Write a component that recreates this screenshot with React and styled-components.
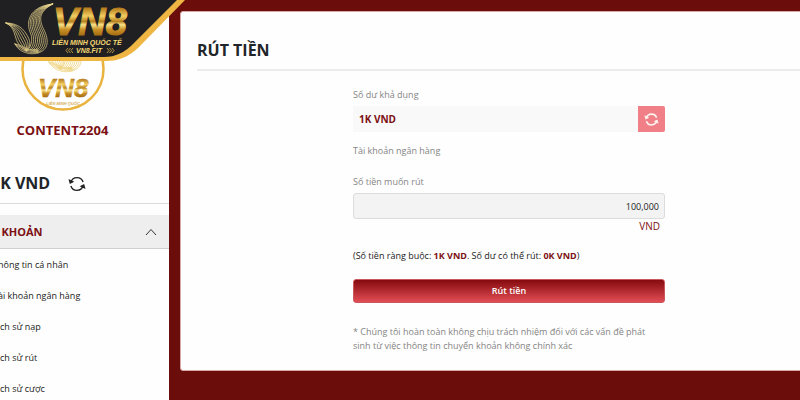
import React, { useState } from "react";
import styled, { createGlobalStyle } from "styled-components";

const GlobalStyle = createGlobalStyle`
  * {
    box-sizing: border-box;
  }

  body {
    margin: 0;
    background: #6b0d0b;
    color: #212529;
    font-family: "Open Sans", "Noto Sans", sans-serif;
    font-size: 9px;
    line-height: 14px;
  }
`;

const PageStyles = styled.div`
  display: flex;
  min-height: 100vh;
  overflow: hidden;
`;

const Sidebar = styled.aside`
  flex: 0 0 169px;
  max-height: 100vh;
  background: #fefefe;
  overflow: hidden;
`;

// the panel is scrolled a bit to the left, so its labels start off screen
const SidebarPanel = styled.div`
  margin-left: -44px;
  padding-top: 27px;
`;

const Profile = styled.div`
  display: flex;
  flex-direction: column;
  align-items: center;
  gap: 9px;

  svg {
    display: block;
    width: 86px;
    height: 84px;
  }
`;

const UserName = styled.h2`
  margin: 0;
  color: #7c1013;
  font-size: 13px;
  font-weight: 700;
  line-height: 20px;
`;

const Balance = styled.div`
  display: flex;
  align-items: center;
  gap: 18px;
  margin-top: 31px;
  padding: 0 0 7px 35px;
  border-bottom: 1px solid #dcdcdc;
  font-size: 16px;
  font-weight: 700;
  line-height: 25px;
`;

const IconButton = styled.button`
  display: flex;
  padding: 0;
  border: 0;
  background: none;
  color: #222;
  cursor: pointer;
`;

const MenuHeader = styled.button`
  display: flex;
  align-items: center;
  justify-content: space-between;
  width: 100%;
  height: 34px;
  margin-top: 11px;
  padding: 0 12px 0 25px;
  border: 0;
  border-bottom: 1px solid #d0d0d0;
  background: #eeeeee;
  color: #7c1013;
  font: inherit;
  font-size: 11px;
  font-weight: 700;
  cursor: pointer;
`;

const MenuList = styled.ul`
  margin: 0;
  padding: 0 0 0 37px;
  list-style: none;
`;

const MenuLink = styled.a`
  display: block;
  padding: 8px 0;
  color: #222;
  line-height: 15px;
  text-decoration: none;
  white-space: nowrap;
`;

const Main = styled.main`
  flex: 1;
  min-width: 0;
  padding: 11px 0 30px 11px;
`;

const Card = styled.section`
  margin-right: -38px;
  padding: 27px 16px 17px;
  border: 1px solid #d9a9a9;
  border-radius: 3px;
  background: #fefefe;
`;

const CardTitle = styled.h1`
  margin: 0;
  padding-bottom: 8px;
  border-bottom: 2px solid #ececec;
  color: #212529;
  font-size: 16px;
  font-weight: 700;
  line-height: 22px;
`;

const Form = styled.form`
  display: flex;
  flex-direction: column;
  max-width: 312px;
  margin: 17px auto 0;
`;

const Label = styled.label`
  margin-bottom: ${props => (props.$spaced ? "17px" : "4px")};
  color: #858585;
`;

const BalanceRow = styled.div`
  display: flex;
  align-items: stretch;
  height: 26px;
  margin-bottom: 12px;
  background: #f9f9f9;

  output {
    flex: 1;
    padding: 0 6px;
    color: #7c1013;
    font-size: 10px;
    font-weight: 700;
    line-height: 26px;
  }
`;

const RefreshButton = styled(IconButton)`
  align-items: center;
  justify-content: center;
  width: 27px;
  border-radius: 0 2px 2px 0;
  background: #f07f87;
  color: #fff3ee;
`;

const AmountInput = styled.input`
  width: 100%;
  height: 26px;
  padding: 0 5px;
  border: 1px solid #dcdcdc;
  border-radius: 3px;
  background: #f3f3f3;
  color: #222;
  font: inherit;
  text-align: right;
`;

const Currency = styled.span`
  padding-right: 5px;
  color: #7c1013;
  font-size: 10px;
  text-align: right;
`;

const Limits = styled.p`
  margin: 16px 0;
  color: #222;

  strong {
    color: #7c1013;
  }
`;

const SubmitButton = styled.button`
  height: 24px;
  border: 1px solid #c9575c;
  border-radius: 3px;
  background: linear-gradient(#850a0e, #e24d54);
  color: #fff;
  font: inherit;
  font-weight: 600;
  cursor: pointer;
`;

const Note = styled.p`
  margin: 22px 0 0;
  color: #858585;
`;

const BrandRibbon = styled.svg`
  position: absolute;
  top: 0;
  left: 0;
  width: 186px;
  height: 62px;
`;

const menuItems = [
  "Thông tin cá nhân",
  "Tài khoản ngân hàng",
  "Lịch sử nạp",
  "Lịch sử rút",
  "Lịch sử cược"
];

// every feather is a fan of curves between two outer edges
const feathers = [
  {
    from: [52.7, 4, 33, 6, 25, 18, 30, 32, 33, 38, 32, 45, 28, 50],
    to: [52.7, 4, 38, 12, 39, 20, 44, 30, 49, 40, 49, 50, 38, 53],
    count: 9
  },
  {
    from: [6, 23, 18, 23, 24, 29, 28, 37, 31, 42, 30, 47, 27, 50],
    to: [6, 23, 16, 28, 14, 37, 18, 43, 20, 46, 22, 48, 26, 51],
    count: 6
  },
  {
    from: [15, 44, 19, 44, 23, 47, 27, 49, 30, 50, 34, 50, 38, 49],
    to: [15, 44, 18, 50, 23, 52, 27, 53, 30, 54, 34, 54, 38, 53],
    count: 4
  }
];

function featherPath({ from, to, count }, i) {
  const t = i / (count - 1);
  const p = from.map((v, k) => (v + (to[k] - v) * t).toFixed(2));
  return `M${p[0]} ${p[1]}C${p.slice(2, 8).join(" ")}C${p.slice(8).join(" ")}`;
}

function Wing({ color, width }) {
  return (
    <g fill="none" stroke={color} strokeWidth={width} strokeLinecap="round">
      {feathers.map((feather, n) =>
        Array.from({ length: feather.count }, (_, i) => (
          <path key={`${n}-${i}`} d={featherPath(feather, i)} />
        ))
      )}
    </g>
  );
}

// y1 and y2 are the top and the baseline of the lettering
function GoldGradient({ id, y1, y2 }) {
  return (
    <linearGradient
      id={id}
      gradientUnits="userSpaceOnUse"
      x1="0"
      y1={y1}
      x2="0"
      y2={y2}
    >
      <stop offset="0" stopColor="#b57a1b" />
      <stop offset="0.3" stopColor="#f3cf62" />
      <stop offset="0.5" stopColor="#b98220" />
      <stop offset="0.62" stopColor="#f9e389" />
      <stop offset="0.8" stopColor="#c98f25" />
      <stop offset="1" stopColor="#a66f14" />
    </linearGradient>
  );
}

function Ribbon() {
  return (
    <BrandRibbon viewBox="0 0 186 62" role="img" aria-label="VN8">
      <defs>
        <GoldGradient id="ribbonGold" y1="8" y2="35" />
      </defs>
      <path d="M0 0H185L139 47Q125 61 106 61H0Z" fill="#efb643" />
      <path d="M0 0H177L134 43Q121 57 104 57H0Z" fill="#202022" />
      <Wing color="#e9d68d" width="0.7" />
      <g
        fontFamily="Liberation Sans, Arial, sans-serif"
        fontWeight="700"
        fontStyle="italic"
      >
        <text
          x="53"
          y="35"
          fontSize="38"
          fill="url(#ribbonGold)"
          stroke="url(#ribbonGold)"
          strokeWidth="1"
        >
          VN8
        </text>
        <text x="52" y="45" fontSize="7" fill="#f5d873">
          LIÊN MINH QUỐC TẾ
        </text>
        <text x="76" y="53" fontSize="7" fill="#f5d873">
          VN8.FIT
        </text>
      </g>
      <path
        d="M68 48l-2 2.500 2 2.500M70.500 48l-2 2.500 2 2.500M73 48l-2 2.500 2 2.500M107 48l2 2.500-2 2.500M109.500 48l2 2.500-2 2.500M112 48l2 2.500-2 2.500"
        fill="none"
        stroke="#d9b34d"
        strokeWidth="0.8"
      />
    </BrandRibbon>
  );
}

function Avatar() {
  return (
    <svg viewBox="0 0 86 84" role="img" aria-label="VN8">
      <defs>
        <GoldGradient id="avatarGold" y1="52" y2="70" />
      </defs>
      <circle cx="43" cy="42" r="40.500" fill="#fff" stroke="#e9b33d" strokeWidth="2.500" />
      <g transform="translate(14 -9)">
        <Wing color="#ecd07a" width="0.8" />
      </g>
      <g
        fontFamily="Liberation Sans, Arial, sans-serif"
        fontWeight="700"
        fontStyle="italic"
      >
        <text
          x="18"
          y="70"
          fontSize="26"
          fill="url(#avatarGold)"
          stroke="url(#avatarGold)"
          strokeWidth="0.6"
        >
          VN8
        </text>
        <text x="43" y="78" fontSize="4" fill="#d3ae54" textAnchor="middle">
          LIÊN MINH QUỐC
        </text>
      </g>
    </svg>
  );
}

function RefreshIcon({ size, stroke }) {
  return (
    <svg width={size} height={size} viewBox="0 0 18 18" aria-hidden="true">
      <g fill="none" stroke="currentColor" strokeWidth={stroke}>
        <path d="M2.900 7.200A6.400 6.400 0 0 1 15.100 7" />
        <path d="M15.100 10.800A6.400 6.400 0 0 1 2.900 11" />
      </g>
      <path d="M0.500 4L6.300 6.800L1.800 9Z" fill="currentColor" />
      <path d="M17.500 14L11.700 11.200L16.200 9Z" fill="currentColor" />
    </svg>
  );
}

export default function App() {
  const [menuOpen, setMenuOpen] = useState(true);
  const [amount, setAmount] = useState("100,000");

  return (
    <>
      <GlobalStyle />
      <PageStyles>
        <Sidebar>
          <SidebarPanel>
            <Profile>
              <Avatar />
              <UserName>CONTENT2204</UserName>
            </Profile>
            <Balance>
              1K VND
              <IconButton type="button" aria-label="Làm mới số dư">
                <RefreshIcon size={18} stroke={1.4} />
              </IconButton>
            </Balance>
            <MenuHeader
              type="button"
              aria-expanded={menuOpen}
              onClick={() => setMenuOpen(!menuOpen)}
            >
              TÀI KHOẢN
              <svg width="12" height="8" viewBox="0 0 12 8" aria-hidden="true">
                <path d="M1 7L6 1.500L11 7" fill="none" stroke="#333" />
              </svg>
            </MenuHeader>
            {menuOpen && (
              <MenuList>
                {menuItems.map(item => (
                  <li key={item}>
                    <MenuLink href="#">{item}</MenuLink>
                  </li>
                ))}
              </MenuList>
            )}
          </SidebarPanel>
        </Sidebar>
        <Main>
          <Card>
            <CardTitle>RÚT TIỀN</CardTitle>
            <Form onSubmit={e => e.preventDefault()}>
              <Label htmlFor="available">Số dư khả dụng</Label>
              <BalanceRow>
                <output id="available">1K VND</output>
                <RefreshButton type="button" aria-label="Làm mới">
                  <RefreshIcon size={15} stroke={2} />
                </RefreshButton>
              </BalanceRow>
              <Label as="span" $spaced>
                Tài khoản ngân hàng
              </Label>
              <Label htmlFor="amount">Số tiền muốn rút</Label>
              <AmountInput
                id="amount"
                value={amount}
                onChange={e => setAmount(e.target.value)}
              />
              <Currency>VND</Currency>
              <Limits>
                (Số tiền ràng buộc: <strong>1K VND</strong>. Số dư có thể rút:{" "}
                <strong>0K VND</strong>)
              </Limits>
              <SubmitButton type="submit">Rút tiền</SubmitButton>
              <Note>
                * Chúng tôi hoàn toàn không chịu trách nhiệm đối với các vấn đề
                phát sinh từ việc thông tin chuyển khoản không chính xác
              </Note>
            </Form>
          </Card>
        </Main>
      </PageStyles>
      <Ribbon />
    </>
  );
}
